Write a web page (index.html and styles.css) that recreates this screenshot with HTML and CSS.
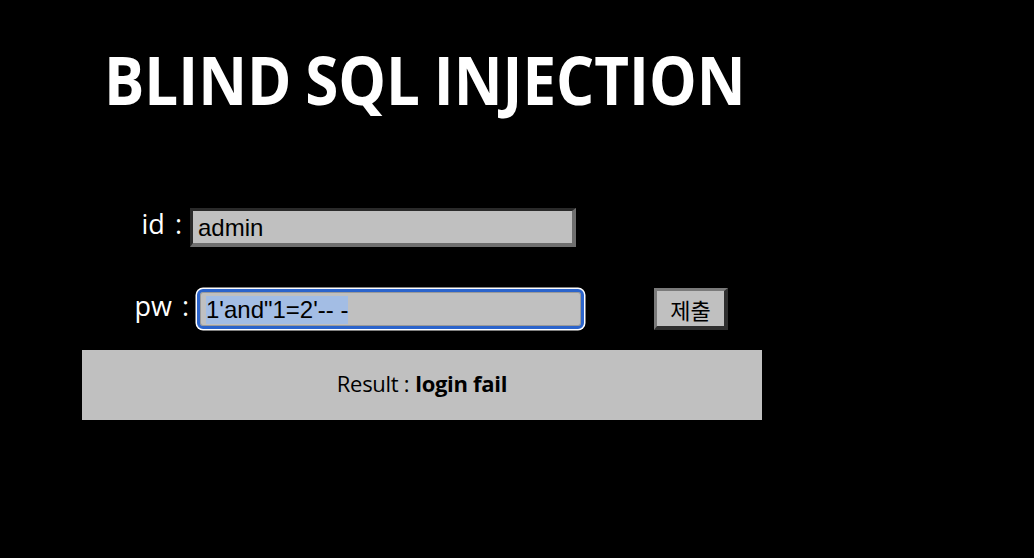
FILE: index.html
```html
<!DOCTYPE html>
<html lang="ko">
<head>
<meta charset="utf-8">
<title>BLIND SQL INJECTION</title>
<link rel="stylesheet" href="styles.css">
</head>
<body>
<main class="page">
  <h1 class="title">BLIND SQL INJECTION</h1>
  <form class="login">
    <div class="row row-id">
      <label class="lbl lbl-id" for="uid">id :</label>
      <input class="field field-id" id="uid" type="text" value="admin">
    </div>
    <div class="row row-pw">
      <label class="lbl lbl-pw" for="upw">pw :</label>
      <input class="field field-pw" id="upw" type="text" value="1'and&quot;1=2'-- -">
      <button class="submit" type="button">제출</button>
    </div>
  </form>
  <div class="result">Result : <b>login fail</b></div>
</main>
<script src="script.js"></script>
</body>
</html>
```
FILE: styles.css
```css
html, body {
  margin: 0;
  padding: 0;
  background: #000;
}
body {
  width: 1034px;
  height: 558px;
  overflow: hidden;
  font-family: "Open Sans", "Noto Sans", sans-serif;
}
.page {
  padding-left: 82px;
  width: 680px;
}
.title {
  margin: 46px 0 0 22px;
  font-family: "Open Sans", sans-serif;
  font-size: 66px;
  line-height: 66px;
  font-weight: 700;
  letter-spacing: 0;
  word-spacing: -2px;
  color: #fff;
  white-space: nowrap;
  transform: scaleX(0.91);
  transform-origin: left center;
}
.login {
  display: flex;
  flex-direction: column;
}
.row {
  display: flex;
  align-items: center;
}
.row-id {
  margin-top: 96px;
}
.row-pw {
  margin-top: 41px;
}
.lbl {
  color: #fff;
  font-family: "Open Sans", sans-serif;
  font-size: 27px;
  text-align: right;
  margin-top: -8px;
  word-spacing: 3px;
}
.lbl-id {
  width: 100px;
  margin-right: 8px;
}
.lbl-pw {
  width: 107px;
  margin-right: 8px;
}
.field {
  box-sizing: border-box;
  background: #c0c0c0;
  color: #000;
  font-family: "Liberation Sans", Arial, sans-serif;
  font-size: 24px;
  margin: 0;
  outline: none;
}
.field-id {
  width: 386px;
  height: 39px;
  border-style: solid;
  border-width: 3px 4px 4px 3px;
  border-color: #2a2a2a #6f6f6f #6f6f6f #2a2a2a;
  padding: 2px 0 0 5px;
}
.field-pw {
  width: 387px;
  height: 40px;
  border: 3px solid #2b64cc;
  border-radius: 6px;
  box-shadow: 0 0 0 1.5px #fff, inset 0 0 0 1px #9a9a9a;
  padding: 2px 0 0 6px;
}
.field-pw::selection {
  background: #a3bde4;
  color: #000;
}
.submit {
  box-sizing: border-box;
  margin-left: 70px;
  width: 74px;
  height: 42px;
  background: #c0c0c0;
  border-style: solid;
  border-width: 3px 4px 4px 3px;
  border-color: #7a7a7a #2e2e2e #2e2e2e #7a7a7a;
  font-family: "Noto Sans CJK KR", sans-serif;
  font-size: 22px;
  color: #000;
  padding: 0;
}
.result {
  margin-top: 20px;
  height: 70px;
  background: #c0c0c0;
  display: flex;
  align-items: center;
  justify-content: center;
  font-family: "Open Sans", sans-serif;
  font-size: 22px;
  letter-spacing: -0.3px;
  color: #000;
  box-sizing: border-box;
  padding-bottom: 4px;
}
.result b {
  font-weight: 700;
  margin-left: 6px;
}
```
FILE: script.js
```js
var pw = document.getElementById('upw');
pw.focus();
pw.setSelectionRange(0, pw.value.length);
```
